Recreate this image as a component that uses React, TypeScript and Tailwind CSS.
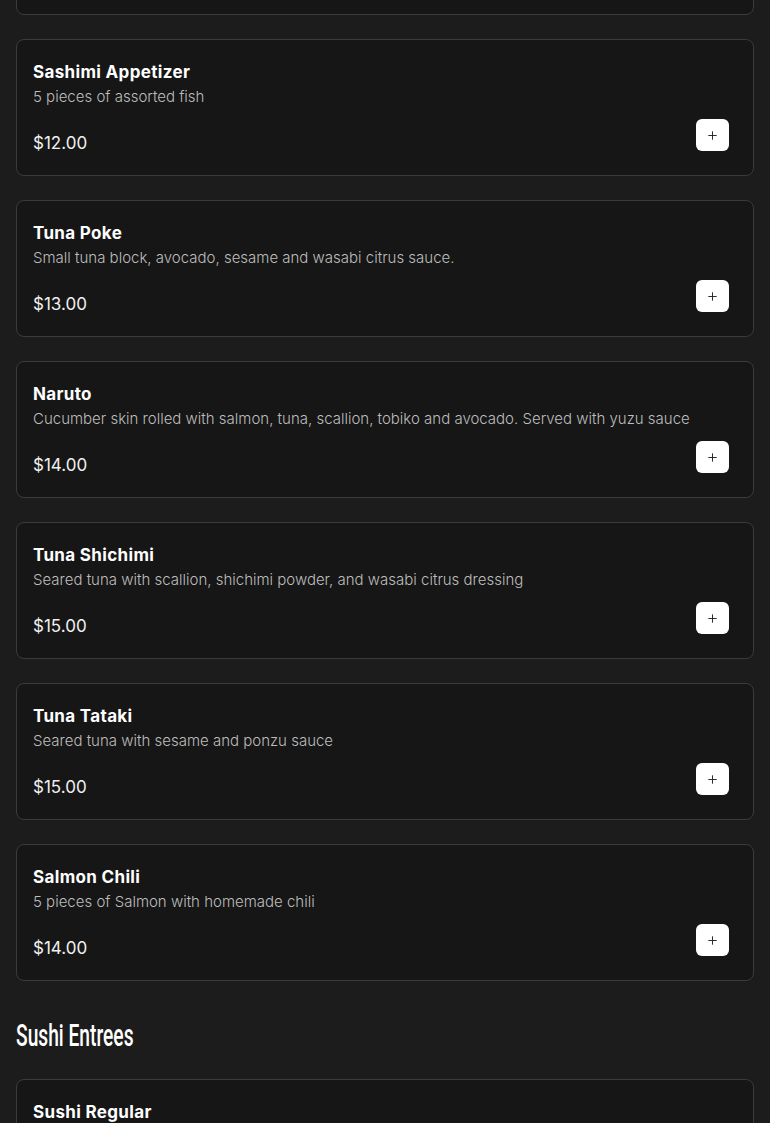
import { Plus } from "lucide-react";

interface MenuItem {
  name: string;
  description: string;
  price: string;
}

const appetizers: MenuItem[] = [
  { name: "Edamame", description: "Steamed soy beans with sea salt", price: "$6.00" },
  { name: "Sashimi Appetizer", description: "5 pieces of assorted fish", price: "$12.00" },
  { name: "Tuna Poke", description: "Small tuna block, avocado, sesame and wasabi citrus sauce.", price: "$13.00" },
  {
    name: "Naruto",
    description: "Cucumber skin rolled with salmon, tuna, scallion, tobiko and avocado. Served with yuzu sauce",
    price: "$14.00",
  },
  { name: "Tuna Shichimi", description: "Seared tuna with scallion, shichimi powder, and wasabi citrus dressing", price: "$15.00" },
  { name: "Tuna Tataki", description: "Seared tuna with sesame and ponzu sauce", price: "$15.00" },
  { name: "Salmon Chili", description: "5 pieces of Salmon with homemade chili", price: "$14.00" },
];

const entrees: MenuItem[] = [
  { name: "Sushi Regular", description: "7 pieces of sushi and a california roll", price: "$24.00" },
];

function ItemCard({ item }: { item: MenuItem }) {
  return (
    <div className="bg-[#161616] border border-[#3b3b3b] rounded-lg pl-4 pr-6 pt-5 pb-5">
      <h3 className="text-[17px] leading-6 font-bold text-white tracking-[0.02em]">{item.name}</h3>
      <p className="mt-[2px] text-[15px] leading-[22px] font-light text-[#bdbdbd]">{item.description}</p>
      <div className="mt-3 flex justify-between items-start">
        <span className="mt-[11px] text-[17px] leading-6 text-[#f0f0f0]">{item.price}</span>
        <button className="-mt-px w-[33px] h-8 bg-white rounded-md flex items-center justify-center text-[#222]">
          <Plus size={13} strokeWidth={1.75} />
        </button>
      </div>
    </div>
  );
}

export default function App() {
  return (
    <div
      className="min-h-screen bg-[#1c1c1c] px-4 overflow-hidden"
      style={{ fontFamily: "Inter, 'Noto Sans', sans-serif" }}
    >
      <div className="-mt-[122px] flex flex-col gap-6">
        {appetizers.map((item) => (
          <ItemCard key={item.name} item={item} />
        ))}
      </div>
      <h2 className="mt-[34px] mb-6 h-10 text-[32px] leading-10 text-white whitespace-nowrap">
        <span
          className="inline-block origin-left scale-x-[0.6] font-medium"
          style={{ fontFamily: "Roboto, 'Liberation Sans', sans-serif" }}
        >
          Sushi Entrees
        </span>
      </h2>
      <div className="flex flex-col gap-6 pb-6">
        {entrees.map((item) => (
          <ItemCard key={item.name} item={item} />
        ))}
      </div>
    </div>
  );
}
